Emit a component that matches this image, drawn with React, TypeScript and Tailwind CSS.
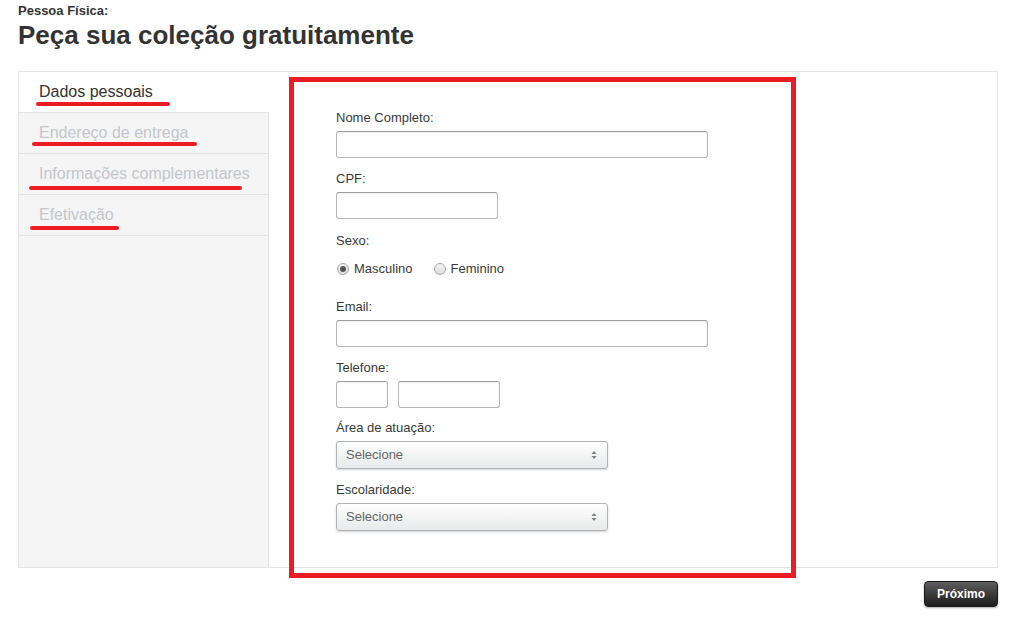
const tabs = ['Dados pessoais', 'Endereço de entrega', 'Informações complementares', 'Efetivação']

const inputCls =
  'block h-[27px] rounded-[3px] border border-[#b4b8bc] border-t-[#9a9ea2] bg-white shadow-[inset_0_1px_1px_rgba(0,0,0,0.06)]'

function Label({ text, className = '' }: { text: string; className?: string }) {
  return <div className={`h-4 text-[13px] leading-4 text-[#3a3a3a] ${className}`}>{text}</div>
}

function Radio({ checked }: { checked?: boolean }) {
  return (
    <span className="flex h-3 w-3 items-center justify-center rounded-full border border-[#a9a9a9] bg-gradient-to-b from-[#f4f4f4] to-[#dcdcdc]">
      {checked && <span className="h-[6px] w-[6px] rounded-full bg-[#555]" />}
    </span>
  )
}

function Select() {
  return (
    <div className="flex h-[28px] w-[272px] items-center justify-between rounded-[3px] border border-[#b0b3b6] bg-gradient-to-b from-white to-[#e8e9ea] pl-[9px] pr-[10px] text-[13px] text-[#666] shadow-[0_1px_2px_rgba(0,0,0,0.18)]">
      <span>Selecione</span>
      <svg width="6" height="10" viewBox="0 0 6 10">
        <path d="M3 1 L5.5 4 H0.5 Z" fill="#7a7d82" />
        <path d="M3 9 L5.5 6 H0.5 Z" fill="#7a7d82" />
      </svg>
    </div>
  )
}

export default function App() {
  return (
    <div className="relative min-h-[638px] w-[1034px] bg-white font-['Liberation_Sans',Arial,sans-serif] text-[#333]">
      {/* Header */}
      <div className="pl-[18px] pt-[3px]">
        <div className="text-[13px] font-bold leading-[15px] text-[#333]">Pessoa Física:</div>
        <h1 className="mt-[2px] text-[26px] font-bold leading-[30px] text-[#333]">
          Peça sua coleção gratuitamente
        </h1>
      </div>

      {/* Panel */}
      <div className="ml-[18px] mt-[21px] flex h-[497px] w-[980px] border border-[#e5e5e5]">
        <div className="flex w-[250px] flex-col">
          {tabs.map((t, i) => (
            <div
              key={t}
              className={`h-[41px] border-b border-[#e3e3e3] pl-[20px] text-[16px] leading-[40px] ${
                i === 0 ? 'bg-white text-[#333]' : 'border-r bg-[#f5f5f5] text-[#c4c6cc]'
              }`}
            >
              {t}
            </div>
          ))}
          <div className="flex-1 border-r border-[#e3e3e3] bg-[#f5f5f5]" />
        </div>

        {/* Form */}
        <div className="flex-1 pl-[67px] pt-[38px]">
          <Label text="Nome Completo:" />
          <div className={`${inputCls} mt-[5px] w-[372px]`} />

          <Label text="CPF:" className="mt-[13px]" />
          <div className={`${inputCls} mt-[5px] w-[162px]`} />

          <Label text="Sexo:" className="mt-[14px]" />
          <div className="mt-[11px] flex h-[18px] items-center text-[13px] text-[#3a3a3a]">
            <span className="ml-[1px]">
              <Radio checked />
            </span>
            <span className="ml-[5px]">Masculino</span>
            <span className="ml-[21px]">
              <Radio />
            </span>
            <span className="ml-[5px]">Feminino</span>
          </div>

          <Label text="Email:" className="mt-[21px]" />
          <div className={`${inputCls} mt-[5px] w-[372px]`} />

          <Label text="Telefone:" className="mt-[13px]" />
          <div className="mt-[5px] flex gap-[10px]">
            <div className={`${inputCls} w-[52px]`} />
            <div className={`${inputCls} w-[102px]`} />
          </div>

          <Label text="Área de atuação:" className="mt-[12px]" />
          <div className="mt-[5px]">
            <Select />
          </div>

          <Label text="Escolaridade:" className="mt-[13px]" />
          <div className="mt-[5px]">
            <Select />
          </div>
        </div>
      </div>

      {/* Footer */}
      <div className="ml-[18px] mt-[13px] flex w-[980px] justify-end">
        <button className="h-[26px] w-[74px] rounded-[4px] border border-[#1a1a1a] bg-gradient-to-b from-[#5e5e5e] to-[#1c1c1c] text-[12px] font-bold text-white shadow-[0_1px_2px_rgba(0,0,0,0.35)]">
          Próximo
        </button>
      </div>

      {/* Annotations */}
      <div className="absolute left-[289px] top-[77px] h-[501px] w-[507px] border-[5px] border-[#ed1c24]" />
      <div className="absolute left-[36px] top-[102px] h-[4px] w-[134px] rounded-full bg-[#ed1c24]" />
      <div className="absolute left-[32px] top-[142px] h-[4px] w-[165px] rounded-full bg-[#ed1c24]" />
      <div className="absolute left-[29px] top-[186px] h-[4px] w-[213px] rounded-full bg-[#ed1c24]" />
      <div className="absolute left-[30px] top-[226px] h-[4px] w-[89px] rounded-full bg-[#ed1c24]" />
    </div>
  )
}
